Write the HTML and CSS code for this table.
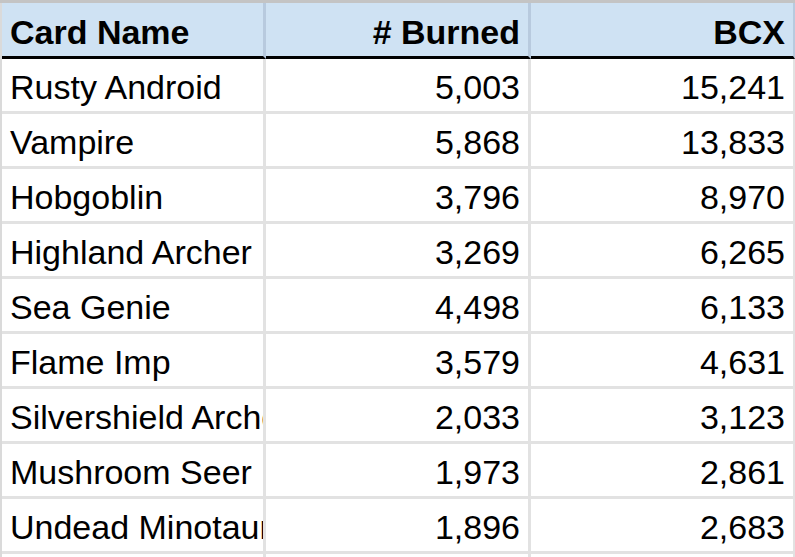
FILE: index.html
```html
<!DOCTYPE html>
<html>
<head>
<meta charset="utf-8">
<link rel="stylesheet" href="styles.css">
</head>
<body>
<div class="sheet">
  <div class="row head">
    <div class="cell left">Card Name</div>
    <div class="cell num"># Burned</div>
    <div class="cell num last">BCX</div>
  </div>
  <div class="row"><div class="cell left">Rusty Android</div><div class="cell num">5,003</div><div class="cell num last">15,241</div></div>
  <div class="row"><div class="cell left">Vampire</div><div class="cell num">5,868</div><div class="cell num last">13,833</div></div>
  <div class="row"><div class="cell left">Hobgoblin</div><div class="cell num">3,796</div><div class="cell num last">8,970</div></div>
  <div class="row"><div class="cell left">Highland Archer</div><div class="cell num">3,269</div><div class="cell num last">6,265</div></div>
  <div class="row"><div class="cell left">Sea Genie</div><div class="cell num">4,498</div><div class="cell num last">6,133</div></div>
  <div class="row"><div class="cell left">Flame Imp</div><div class="cell num">3,579</div><div class="cell num last">4,631</div></div>
  <div class="row"><div class="cell left">Silvershield Archers</div><div class="cell num">2,033</div><div class="cell num last">3,123</div></div>
  <div class="row"><div class="cell left">Mushroom Seer</div><div class="cell num">1,973</div><div class="cell num last">2,861</div></div>
  <div class="row"><div class="cell left">Undead Minotaur</div><div class="cell num">1,896</div><div class="cell num last">2,683</div></div>
  <div class="row"><div class="cell left"></div><div class="cell num"></div><div class="cell num last"></div></div>
</div>
</body>
</html>
```
FILE: styles.css
```css
html, body {
  margin: 0;
  padding: 0;
  background: #ffffff;
  overflow: hidden;
}
.sheet {
  width: 795px;
  height: 557px;
  overflow: hidden;
  border-top: 3px solid #c4c4c4;
  font-family: "Liberation Sans", Arial, sans-serif;
  font-size: 34px;
  color: #000000;
  box-sizing: border-box;
}
.row {
  display: grid;
  grid-template-columns: 2px 264px 265px 264px;
  height: 55px;
}
.row::before {
  content: "";
  background: #dadada;
}
.cell {
  box-sizing: border-box;
  border-right: 3px solid #e2e2e2;
  border-bottom: 3px solid #e2e2e2;
  white-space: nowrap;
  overflow: hidden;
  padding-top: 4px;
  line-height: 48px;
  height: 55px;
}
.cell.last {
  border-right-width: 2px;
}
.left {
  padding-left: 8px;
  padding-right: 0;
}
.num {
  text-align: right;
  padding-right: 8px;
}
.head {
  height: 56px;
}
.head .cell {
  background: #cfe2f3;
  font-weight: bold;
  height: 56px;
  padding-top: 5px;
  border-bottom: 3px solid #000000;
  border-right-color: #b8cade;
}
```
